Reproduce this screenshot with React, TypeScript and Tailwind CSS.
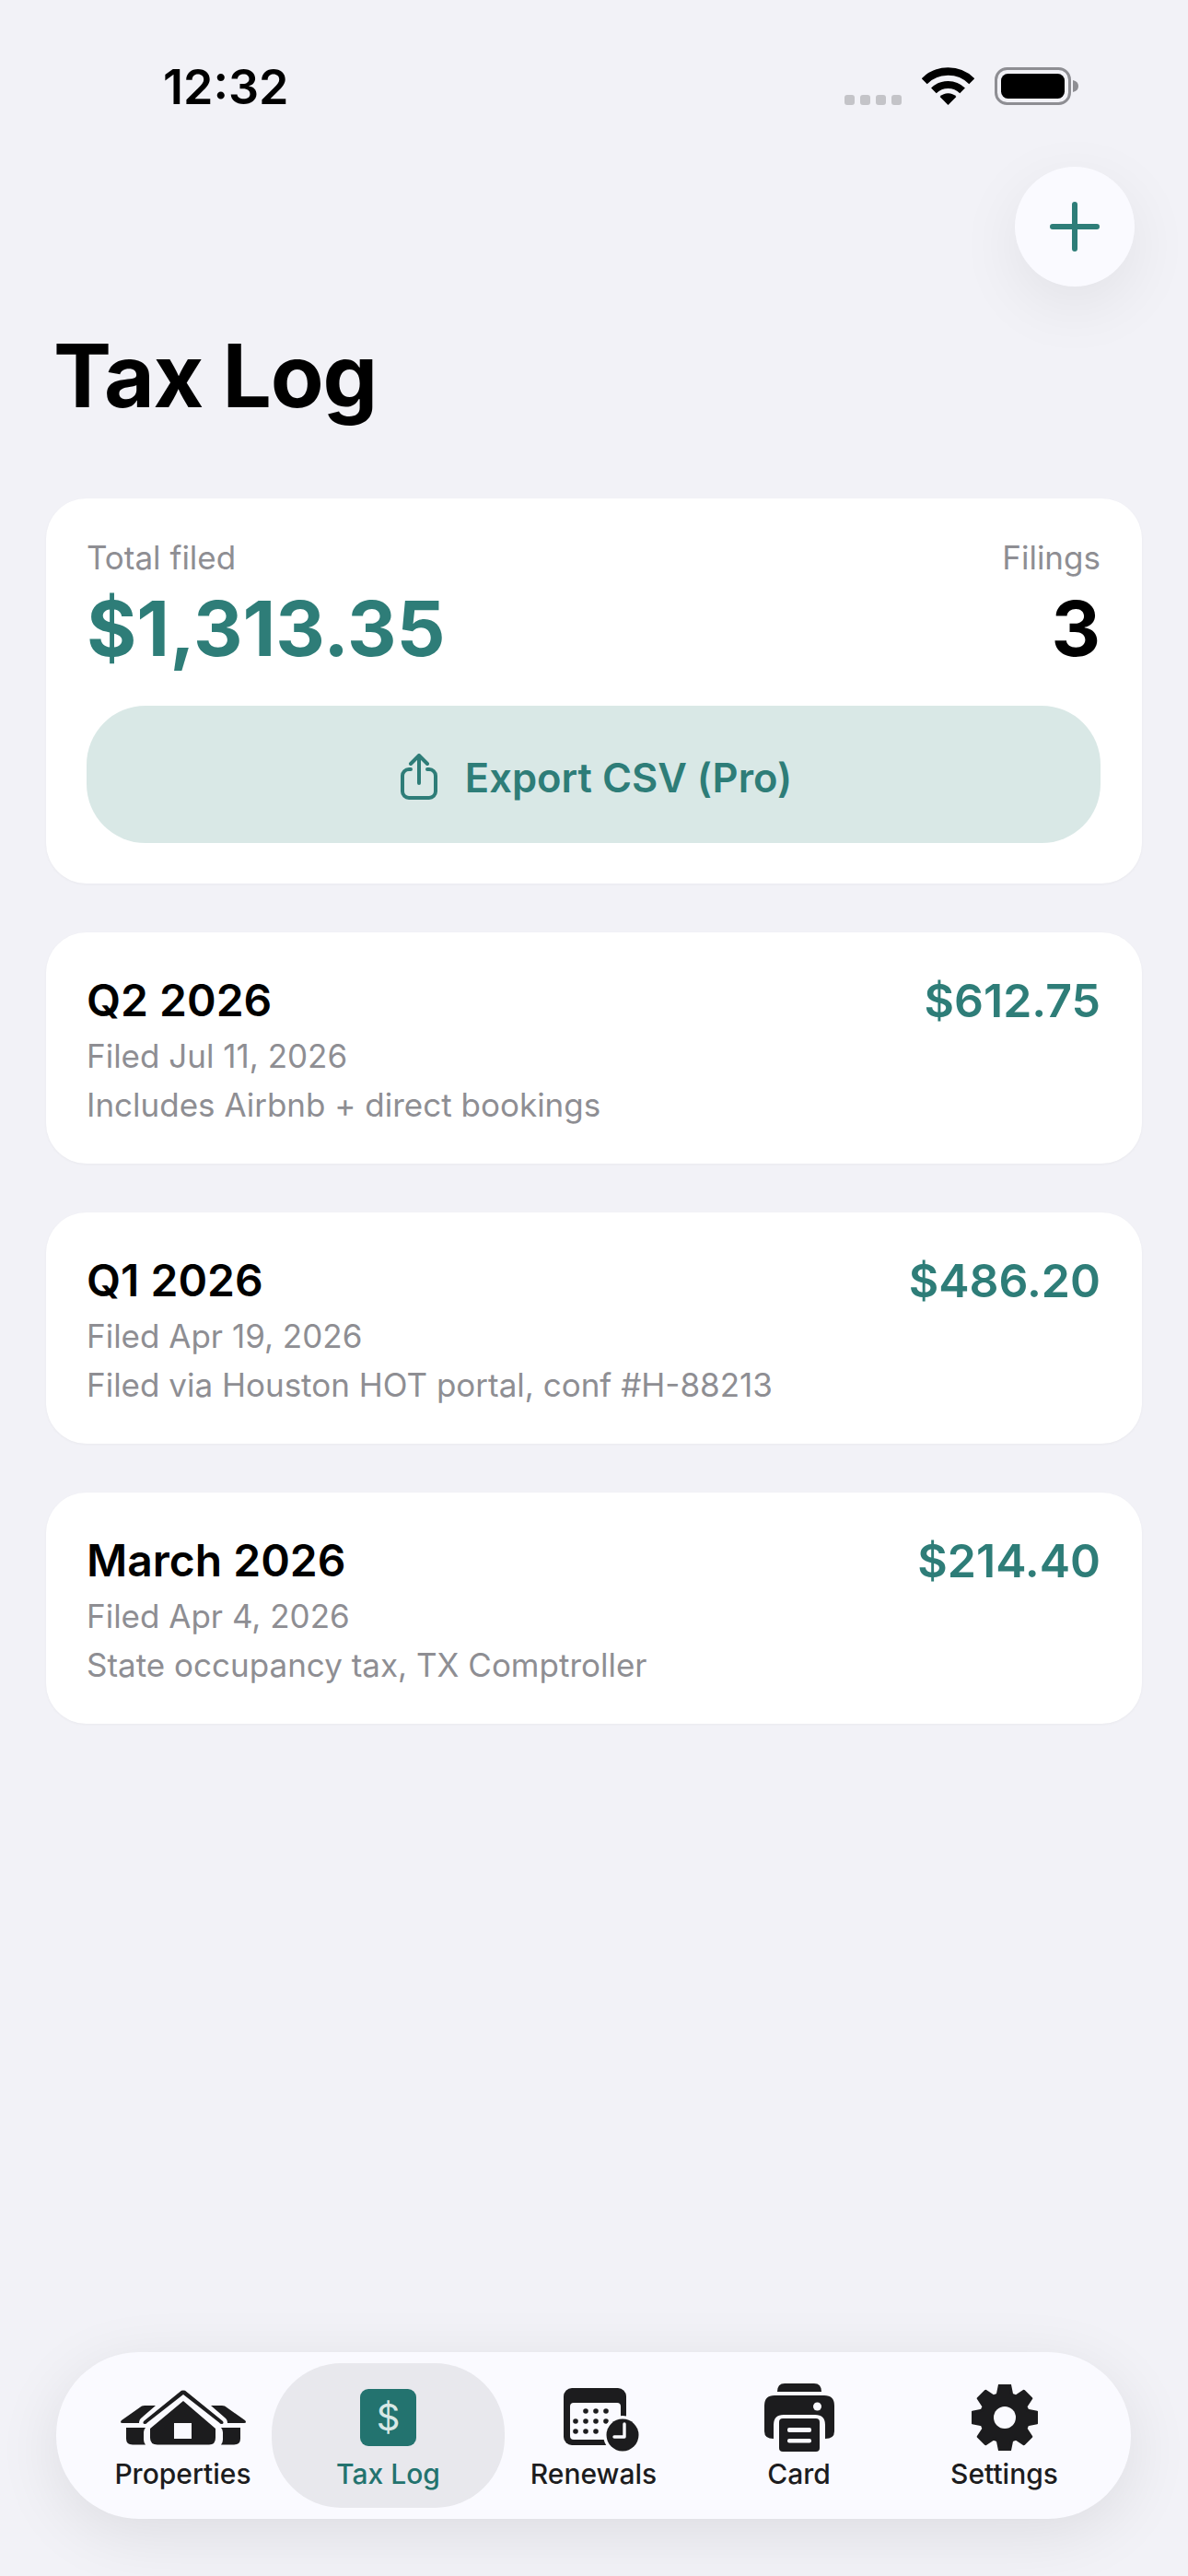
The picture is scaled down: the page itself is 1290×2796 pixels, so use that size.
import type { ReactNode } from 'react';

const filings = [
  { title: 'Q2 2026', amount: '$612.75', filed: 'Filed Jul 11, 2026', note: 'Includes Airbnb + direct bookings' },
  { title: 'Q1 2026', amount: '$486.20', filed: 'Filed Apr 19, 2026', note: 'Filed via Houston HOT portal, conf #H-88213' },
  { title: 'March 2026', amount: '$214.40', filed: 'Filed Apr 4, 2026', note: 'State occupancy tax, TX Comptroller' },
];

function WifiIcon() {
  return (
    <svg width="57" height="41" viewBox="0 0 57 41" fill="none">
      <path d="M28.5 41 L19.6 32 A12.6 12.6 0 0 1 37.4 32 Z" fill="#000" />
      <path d="M12.9 25.4 A22 22 0 0 1 44.1 25.4" stroke="#000" strokeWidth="8" />
      <path d="M2.7 15.2 A36.5 36.5 0 0 1 54.3 15.2" stroke="#000" strokeWidth="8.5" />
    </svg>
  );
}

function BatteryIcon() {
  return (
    <svg width="91" height="41" viewBox="0 0 91 41" fill="none">
      <rect x="1.5" y="1.5" width="80" height="38" rx="12" stroke="#8e8e93" strokeWidth="3" />
      <rect x="7" y="7" width="69" height="27" rx="7.5" fill="#000" />
      <path d="M85 14 C89 15 91 17 91 20.5 C91 24 89 26 85 27 Z" fill="#8e8e93" />
    </svg>
  );
}

function ShareIcon() {
  return (
    <svg width="40" height="50" viewBox="0 0 40 50" fill="none" stroke="#2e7d78" strokeWidth="4" strokeLinecap="round" strokeLinejoin="round">
      <path d="M11 17 H9 A7 7 0 0 0 2 24 V41 A7 7 0 0 0 9 48 H31 A7 7 0 0 0 38 41 V24 A7 7 0 0 0 31 17 H29" />
      <path d="M20 32 V3" />
      <path d="M11 11 L20 2 L29 11" />
    </svg>
  );
}

function HouseIcon() {
  return (
    <svg width="136" height="60" viewBox="0 0 136 60" fill="#1c1c1e">
      <path d="M0 35 Q0 34 1 33 L23 17.5 Q24.5 17 26 17 L38 17 L23 30 Q20 32 20 36 L2 36 Q0 36 0 35 Z" />
      <path d="M136 35 Q136 34 135 33 L113 17.5 Q111.5 17 110 17 L98 17 L113 30 Q116 32 116 36 L134 36 Q136 36 136 35 Z" />
      <path d="M6 41 H27 Q25 43 25 46 V54 Q25 57 27 59.5 H13 Q6 59.5 6 53 Z" />
      <path d="M130 41 H109 Q111 43 111 46 V54 Q111 57 109 59.5 H123 Q130 59.5 130 53 Z" />
      <path d="M25 34 L66 0.8 Q68 0 70 0.8 L111 34 Q112.5 36.5 110 37 Q108 37 107 35.5 L68 5 L29 35.5 Q28 37 26 37 Q23.5 36.5 25 34 Z" />
      <path
        fillRule="evenodd"
        d="M68 12 L103 42 V52 Q103 59.5 96 59.5 H40 Q32 59.5 32 52 V42 Z M58 36 V53 H77 V36 Z"
      />
    </svg>
  );
}

function CalendarIcon() {
  const dots = [
    [24, 25], [35, 25], [46, 25],
    [13, 36], [24, 36], [35, 36], [46, 36],
    [13, 47], [24, 47], [35, 47],
  ];
  return (
    <svg className="mt-[5px] ml-[16px]" width="82" height="70" viewBox="0 0 82 70">
      <rect x="0" y="0" width="68" height="62" rx="9" fill="#1c1c1e" />
      <rect x="7" y="16" width="55" height="40" rx="4" fill="#fafaff" />
      {dots.map(([cx, cy]) => (
        <circle key={`${cx}-${cy}`} cx={cx} cy={cy} r="2.8" fill="#1c1c1e" />
      ))}
      <circle cx="64" cy="51" r="21" fill="#fafaff" />
      <circle cx="64" cy="51" r="17.5" fill="#1c1c1e" />
      <path d="M66 39 V53 H55" fill="none" stroke="#fafaff" strokeWidth="3.4" strokeLinecap="round" strokeLinejoin="round" />
    </svg>
  );
}

function PrinterIcon() {
  return (
    <svg width="76" height="74" viewBox="0 0 76 74">
      <path d="M14 9 Q14 0 22 0 H54 Q62 0 62 9 Z" fill="#1c1c1e" />
      <path d="M0 24 Q0 13 11 13 H65 Q76 13 76 24 V52 Q76 60 66 60 V45 Q66 34 55 34 H21 Q10 34 10 45 V60 Q0 60 0 52 Z" fill="#1c1c1e" />
      <circle cx="57.5" cy="25" r="4.5" fill="#fafaff" />
      <rect x="16" y="38" width="44" height="36" rx="4" fill="#1c1c1e" />
      <rect x="25" y="48" width="26" height="5" rx="2" fill="#fafaff" />
      <rect x="25" y="60" width="26" height="4.5" rx="2" fill="#fafaff" />
    </svg>
  );
}

function GearIcon() {
  // eight teeth around the hub, worked out instead of typed point by point
  const pts: string[] = [];
  for (let i = 0; i < 8; i++) {
    const a = (i * Math.PI) / 4 - Math.PI / 2;
    const spots: [number, number][] = [[-0.3, 26], [-0.16, 35.5], [0.16, 35.5], [0.3, 26]];
    spots.forEach(([da, r]) => {
      pts.push(`${36 + r * Math.cos(a + da)},${36 + r * Math.sin(a + da)}`);
    });
  }
  return (
    <svg width="72" height="72" viewBox="0 0 72 72">
      <polygon points={pts.join(' ')} fill="#1c1c1e" stroke="#1c1c1e" strokeWidth="3" strokeLinejoin="round" />
      <circle cx="36" cy="36" r="12" fill="#fafaff" />
    </svg>
  );
}

function TabItem({ icon, label, active }: { icon: ReactNode; label: string; active?: boolean }) {
  return (
    <div
      className={`flex flex-col items-center pt-[22px] ${
        active ? '-mx-[15px] rounded-[76px] bg-[#e8e8ed] text-[#23736f]' : 'text-[#1c1c1e]'
      }`}
    >
      <div className="flex h-[74px] items-center justify-center">{icon}</div>
      <span className="mt-[4px] text-[30px] leading-[40px] font-medium">{label}</span>
    </div>
  );
}

export default function App() {
  return (
    <div className="flex min-h-[2796px] flex-col bg-[#f2f2f7] font-['Inter',sans-serif] text-black">
      {/* status bar */}
      <div className="flex h-[126px] items-end justify-between pr-[119px] pl-[177px]">
        <span className="text-[52px] leading-[62px] font-semibold">12:32</span>
        <div className="flex items-end pb-[12px]">
          <div className="mr-[22px] flex gap-[6px]">
            <span className="h-[11px] w-[11px] rounded-[3px] bg-[#c4c4c8]" />
            <span className="h-[11px] w-[11px] rounded-[3px] bg-[#c4c4c8]" />
            <span className="h-[11px] w-[11px] rounded-[3px] bg-[#c4c4c8]" />
            <span className="h-[11px] w-[11px] rounded-[3px] bg-[#c4c4c8]" />
          </div>
          <WifiIcon />
          <div className="ml-[22px]">
            <BatteryIcon />
          </div>
        </div>
      </div>

      {/* add button */}
      <div className="flex justify-end pt-[55px] pr-[58px]">
        <button className="flex h-[130px] w-[130px] items-center justify-center rounded-full bg-[#fafaff] shadow-[0_20px_70px_rgba(0,0,0,0.07)]">
          <svg width="54" height="54" viewBox="0 0 54 54" stroke="#2e7d78" strokeWidth="6" strokeLinecap="round">
            <path d="M27 3 V51 M3 27 H51" />
          </svg>
        </button>
      </div>

      <h1 className="mt-[35px] pl-[58px] text-[94.5px] leading-[124px] font-bold tracking-[-1.2px]">Tax Log</h1>

      {/* summary */}
      <div className="mx-[50px] mt-[71px] rounded-[44px] bg-white pt-[42px] pr-[45px] pb-[44px] pl-[44px] shadow-[0_1px_3px_rgba(0,0,0,0.04)]">
        <div className="flex justify-between text-[35px] leading-[44px] text-[#8e8e93]">
          <span>Total filed</span>
          <span>Filings</span>
        </div>
        <div className="mt-[5px] flex justify-between text-[83px] leading-[100px] font-bold">
          <span className="text-[#2e7d78]">$1,313.35</span>
          <span>3</span>
        </div>
        <button className="mt-[34px] flex h-[149px] w-full items-center justify-center gap-[30px] rounded-[64px] bg-[#d9e8e6] pt-[5px] pl-[6px] text-[43.5px] font-semibold text-[#2e7d78]">
          <ShareIcon />
          <span className="mt-[3px]">Export CSV (Pro)</span>
        </button>
      </div>

      {/* filings */}
      <div className="mt-[53px] flex flex-col gap-[53px]">
        {filings.map((f) => (
          <div
            key={f.title}
            className="mx-[50px] h-[251px] rounded-[44px] bg-white pt-[41px] pr-[45px] pl-[44px] shadow-[0_1px_3px_rgba(0,0,0,0.04)]"
          >
            <div className="flex items-center justify-between leading-[66px] font-semibold">
              <span className="text-[48px]">{f.title}</span>
              <span className="text-[50px] text-[#2e7d78]">{f.amount}</span>
            </div>
            <p className="mt-[1px] text-[35px] leading-[52px] text-[#8e8e93]">{f.filed}</p>
            <p className="text-[35px] leading-[54px] text-[#8e8e93]">{f.note}</p>
          </div>
        ))}
      </div>

      {/* tab bar */}
      <div className="mt-auto mb-[62px] ml-[61px] grid h-[181px] w-[1167px] grid-cols-5 rounded-[90px] bg-[#fafaff] px-[26px] py-[12px] shadow-[0_16px_70px_rgba(0,0,0,0.09)]">
        <TabItem icon={<HouseIcon />} label="Properties" />
        <TabItem
          icon={
            <div className="flex h-[62px] w-[61px] items-center justify-center rounded-[9px] bg-[#23736f] text-[40px] text-[#d8e8e6]">$</div>
          }
          label="Tax Log"
          active
        />
        <TabItem icon={<CalendarIcon />} label="Renewals" />
        <TabItem icon={<PrinterIcon />} label="Card" />
        <TabItem icon={<GearIcon />} label="Settings" />
      </div>
    </div>
  );
}
